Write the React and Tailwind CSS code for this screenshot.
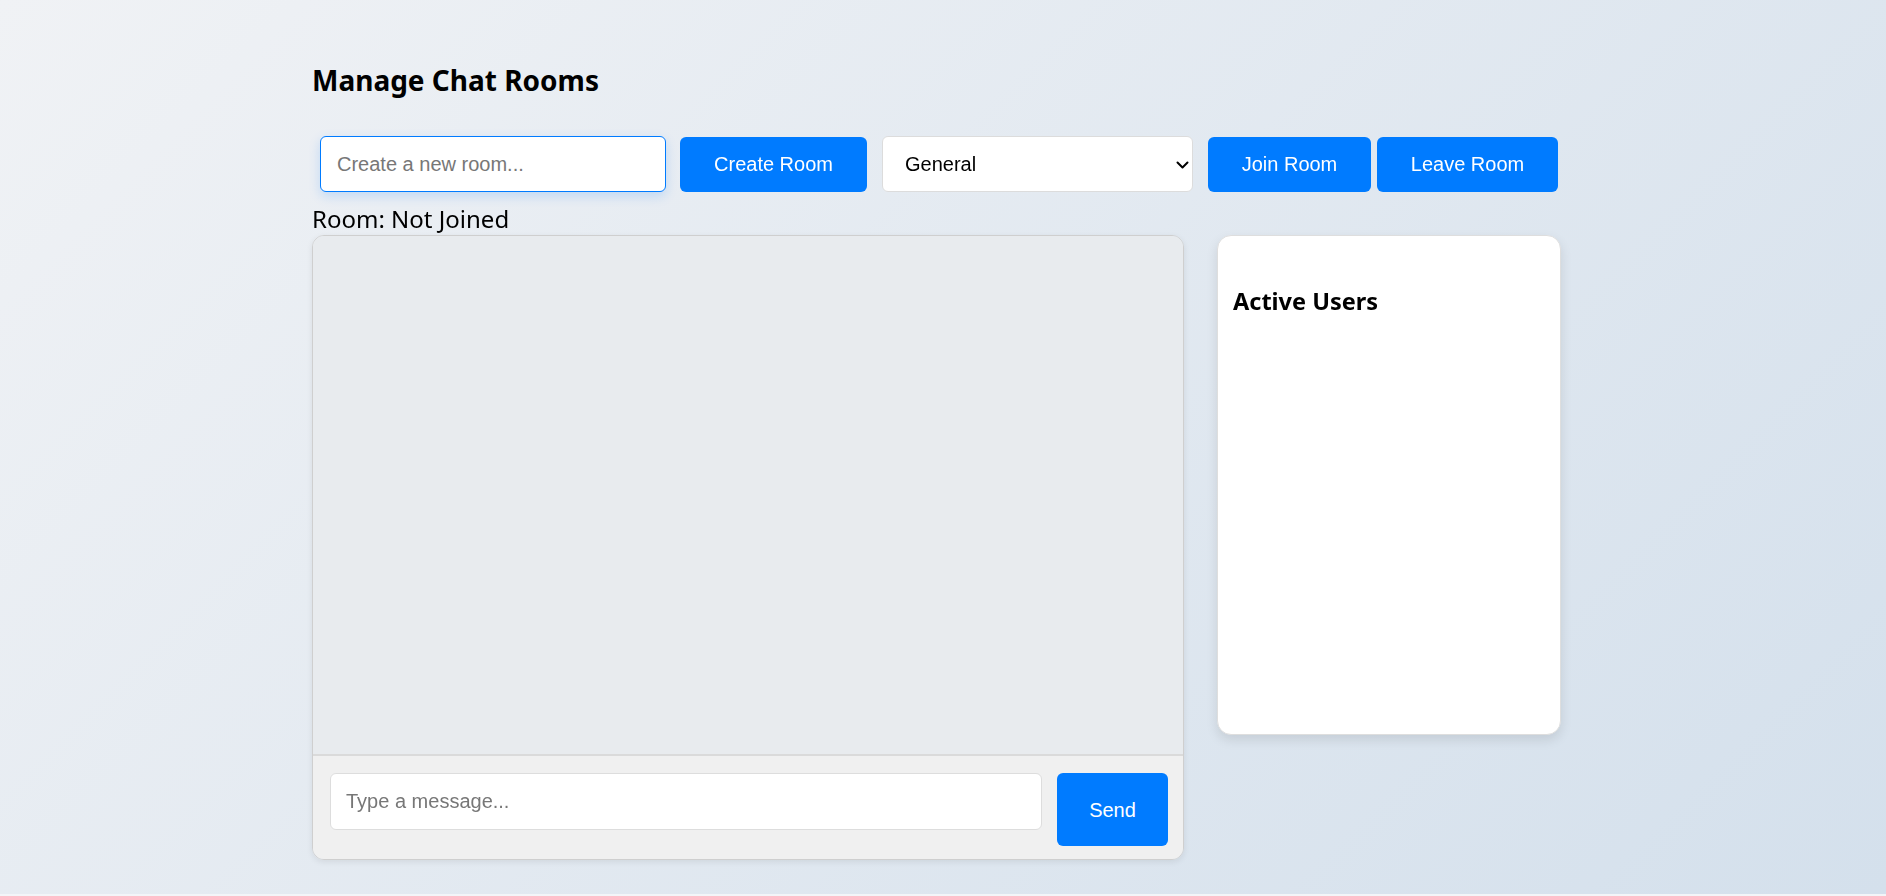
import React from 'react';

const ui = { fontFamily: '"Noto Sans", "Open Sans", sans-serif' };
const arial = { fontFamily: '"Liberation Sans", Arial, sans-serif' };

function Toolbar() {
    return (
        <div className="flex items-center mt-[36px] h-[56px]" style={arial}>
            <input
                autoFocus
                placeholder="Create a new room..."
                className="ml-[8px] w-[346px] h-[56px] px-[16px] text-[20px] bg-white border border-[#007bff] rounded-[6px] outline-none shadow-[0_4px_12px_rgba(0,123,255,0.18)] placeholder:text-[#777]"
            />
            <button className="ml-[14px] w-[187px] h-[55px] bg-[#007bff] text-white text-[20px] rounded-[6px]">
                Create Room
            </button>
            <div className="relative ml-[15px]">
                <select className="w-[311px] h-[56px] pl-[22px] text-[20px] text-black bg-white border border-[#dcdcdc] rounded-[6px] appearance-none outline-none">
                    <option>General</option>
                    <option>Random</option>
                    <option>Tech</option>
                </select>
                {/* native arrow replaced */}
                <svg width="13" height="8" viewBox="0 0 13 8" className="absolute right-[4px] top-[25px] pointer-events-none">
                    <polyline points="1.5,1.5 6.5,6.5 11.5,1.5" fill="none" stroke="#000" strokeWidth="2" strokeLinecap="round" strokeLinejoin="round" />
                </svg>
            </div>
            <button className="ml-[15px] w-[163px] h-[55px] bg-[#007bff] text-white text-[20px] rounded-[6px]">
                Join Room
            </button>
            <button className="ml-[6px] w-[181px] h-[55px] bg-[#007bff] text-white text-[20px] rounded-[6px]">
                Leave Room
            </button>
        </div>
    );
}

function ChatBox() {
    return (
        <div className="w-[872px] h-[625px] flex flex-col border border-[#cfcfcf] rounded-[12px] overflow-hidden shadow-[0_2px_6px_rgba(0,0,0,0.08)]">
            <div className="flex-1 bg-[#e8ebee]" />
            <div className="h-[105px] flex items-start gap-[15px] pt-[17px] pl-[17px] border-t-[2px] border-[#dadada] bg-[#f0f0f0]" style={arial}>
                <input
                    placeholder="Type a message..."
                    className="w-[712px] h-[57px] px-[15px] text-[20px] bg-white border border-[#dddddd] rounded-[6px] outline-none placeholder:text-[#777]"
                />
                <button className="w-[111px] h-[73px] bg-[#007bff] text-white text-[20px] rounded-[6px]">
                    Send
                </button>
            </div>
        </div>
    );
}

function UserList() {
    return (
        <div className="w-[344px] h-[500px] bg-white border border-[#dedede] rounded-[14px] shadow-[0_5px_12px_rgba(0,0,0,0.1)] px-[15px] pt-[50px]">
            <h3 className="text-[23.5px] leading-[30px] font-bold text-black" style={ui}>Active Users</h3>
        </div>
    );
}

export default function App() {
    return (
        <div className="w-full h-[896px] bg-[#f3f5f8]">
            <div className="h-[894px] bg-linear-135 from-[#f0f2f5] to-[#d4e0ec] overflow-hidden">
                <div className="ml-[312px] pt-[60px]">
                    <h2 className="text-[28px] leading-[40px] font-bold text-black" style={ui}>Manage Chat Rooms</h2>
                    <Toolbar />
                    <div className="h-[43px] pt-[11px] text-[24px] leading-[32px] text-black" style={ui}>
                        Room: Not Joined
                    </div>
                    <div className="flex items-start gap-[33px]">
                        <ChatBox />
                        <UserList />
                    </div>
                </div>
            </div>
        </div>
    );
}
